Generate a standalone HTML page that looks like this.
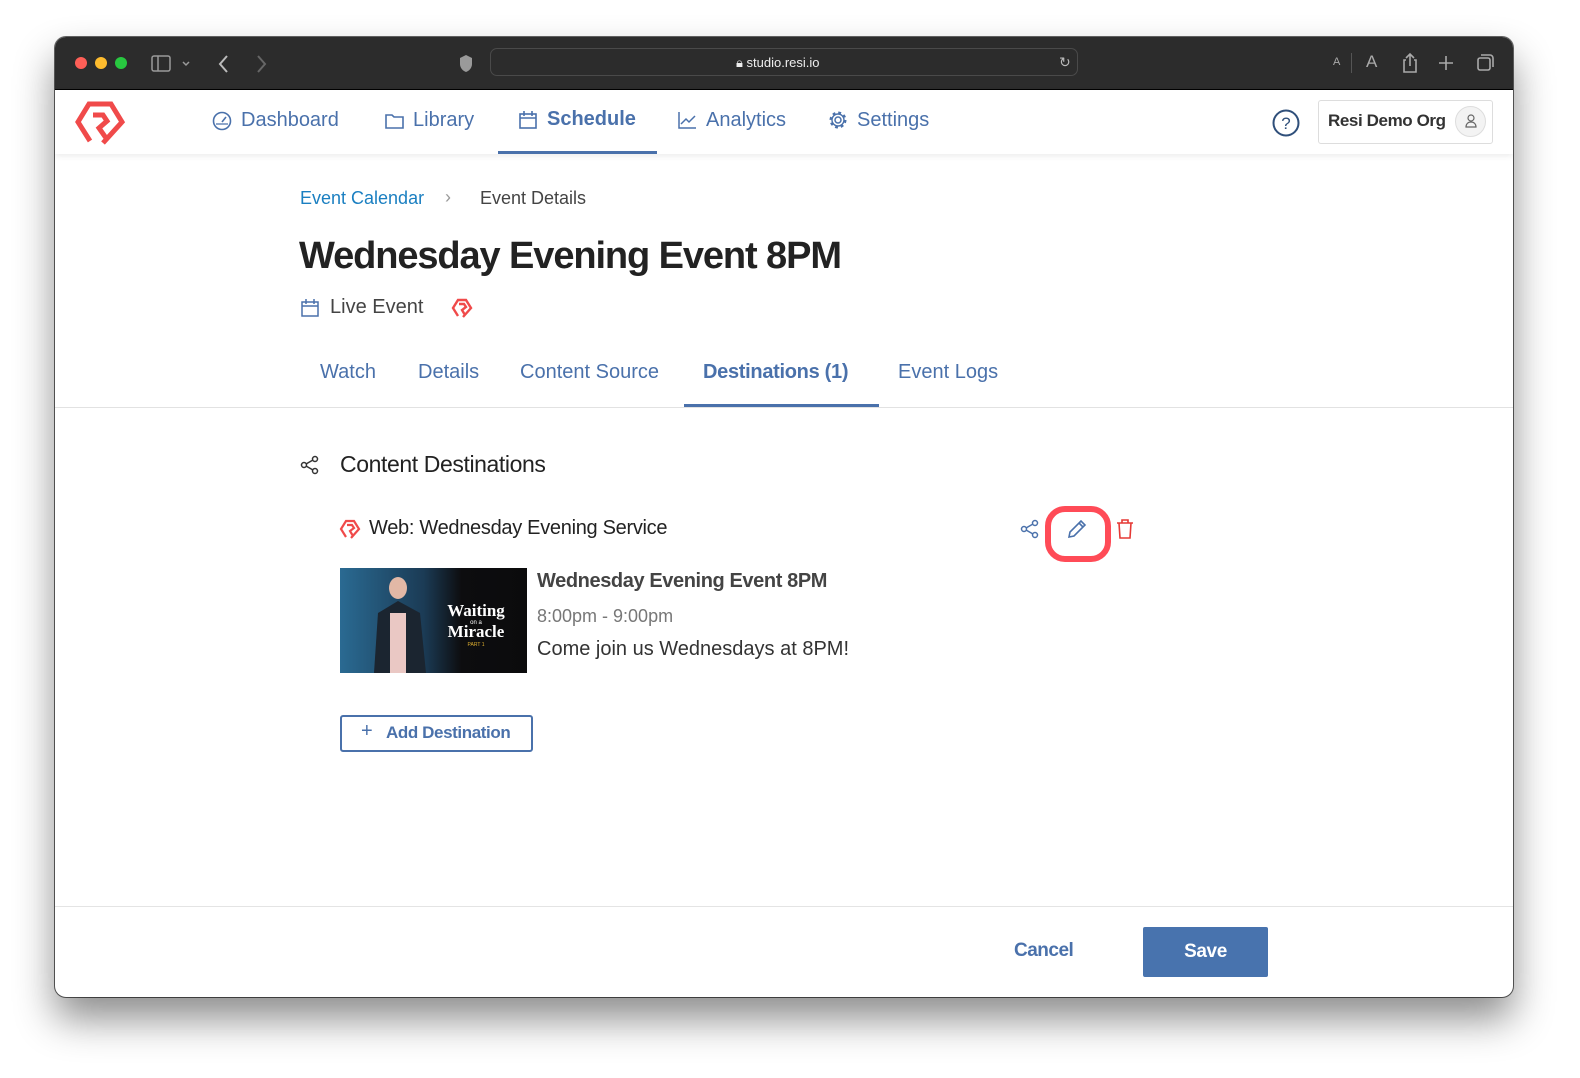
<!DOCTYPE html>
<html><head><meta charset="utf-8"><style>
*{margin:0;padding:0;box-sizing:border-box}
body{width:1580px;height:1078px;background:#fff;position:relative;overflow:hidden;font-family:"Liberation Sans",sans-serif}
.win{position:absolute;left:55px;top:37px;width:1458px;height:960px;border-radius:11px;background:#fff;overflow:hidden;box-shadow:0 22px 40px rgba(0,0,0,.45),0 0 0 1px rgba(0,0,0,.6)}
.tb{position:absolute;left:0;top:0;width:100%;height:53px;background:#2c2c2c;border-bottom:1px solid #000}
.a{position:absolute;white-space:nowrap}
.nav{position:absolute;left:0;top:53px;width:100%;height:64px;background:#fff;box-shadow:0 2px 6px rgba(0,0,0,.08)}
.nl{color:#4a71ab;font-size:20px}
</style></head><body>
<div class="win">
 <div class="tb">
  <div class="a" style="left:20px;top:20px;width:12px;height:12px;border-radius:50%;background:#fe5f57"></div>
  <div class="a" style="left:40px;top:20px;width:12px;height:12px;border-radius:50%;background:#febc2e"></div>
  <div class="a" style="left:60px;top:20px;width:12px;height:12px;border-radius:50%;background:#28c840"></div>
  <svg class="a" style="left:96px;top:17px" width="50" height="20"><rect x="1" y="2" width="18" height="15" rx="2" fill="none" stroke="#9a9a9a" stroke-width="1.5"/><line x1="7" y1="2" x2="7" y2="17" stroke="#9a9a9a" stroke-width="1.5"/><path d="M32 8l3 3 3-3" stroke="#9a9a9a" fill="none" stroke-width="1.5"/></svg>
  <svg class="a" style="left:160px;top:16px" width="60" height="22"><path d="M12 3l-7 8 7 8" stroke="#bbb" fill="none" stroke-width="2"/><path d="M43 3l7 8-7 8" stroke="#666" fill="none" stroke-width="2"/></svg>
  <svg class="a" style="left:403px;top:17px" width="16" height="20"><path d="M8 1l6 3v6c0 4-3 7-6 8-3-1-6-4-6-8V4z" fill="#9a9a9a"/></svg>
  <div class="a" style="left:435px;top:11px;width:588px;height:28px;border:1px solid #4a4a4a;border-radius:7px;background:#2c2c2c"></div>
  <div class="a" style="left:681px;top:18px;color:#eee;font-size:13px">🔒︎ studio.resi.io</div>
  <div class="a" style="left:1004px;top:17px;color:#bbb;font-size:14px">↻</div>
  <div class="a" style="left:1278px;top:19px;color:#aaa;font-size:11px">A</div>
  <div class="a" style="left:1296px;top:16px;width:1px;height:20px;background:#555"></div>
  <div class="a" style="left:1311px;top:15px;color:#aaa;font-size:17px">A</div>
  <svg class="a" style="left:1345px;top:14px" width="120" height="24"><path d="M6 9H4v12h12V9h-2M10 3v12M6 7l4-4 4 4" stroke="#aaa" fill="none" stroke-width="1.6"/><path d="M46 5v14M39 12h14" stroke="#aaa" stroke-width="1.6"/><rect x="78" y="7" width="12" height="12" rx="2" stroke="#aaa" fill="none" stroke-width="1.6"/><path d="M81 4h9a3 3 0 0 1 3 3v9" stroke="#aaa" fill="none" stroke-width="1.6"/></svg>
 </div>
 <div class="nav">
  <svg class="a" style="left:20px;top:10px" width="50" height="46"><g fill="none" stroke="#f04a4a" stroke-width="5" stroke-linejoin="miter"><path d="M15 41L3 22 14 4h22l11 18-19 21"/><path d="M18 15h10l4 6-8 7 7 10"/></g></svg>
  <svg class="a" style="left:156px;top:20px" width="22" height="22"><circle cx="11" cy="11" r="8.5" fill="none" stroke="#4a71ab" stroke-width="1.6"/><path d="M11 12l4-5" stroke="#4a71ab" stroke-width="1.6"/><path d="M5 14h12" stroke="#4a71ab" stroke-width="1.2"/></svg>
  <div class="a nl" style="left:186px;top:19px">Dashboard</div>
  <svg class="a" style="left:329px;top:21px" width="22" height="20"><path d="M2 4h6l2 2h9v11H2z" fill="none" stroke="#4a71ab" stroke-width="1.6"/></svg>
  <div class="a nl" style="left:358px;top:19px">Library</div>
  <svg class="a" style="left:463px;top:20px" width="20" height="20"><rect x="2" y="4" width="16" height="14" fill="none" stroke="#4a71ab" stroke-width="1.6"/><path d="M2 8h16M6 1v5M14 1v5" stroke="#4a71ab" stroke-width="1.6"/></svg>
  <div class="a nl" style="left:492px;top:18px;font-weight:bold">Schedule</div>
  <div class="a" style="left:443px;top:61px;width:159px;height:3px;background:#4a71ab"></div>
  <svg class="a" style="left:622px;top:20px" width="20" height="20"><path d="M2 2v16h17M4 14l5-5 3 3 6-6" fill="none" stroke="#4a71ab" stroke-width="1.5"/></svg>
  <div class="a nl" style="left:651px;top:19px">Analytics</div>
  <svg class="a" style="left:772px;top:19px" width="22" height="22"><circle cx="11" cy="11" r="3" fill="none" stroke="#4a71ab" stroke-width="1.5"/><circle cx="11" cy="11" r="7" fill="none" stroke="#4a71ab" stroke-width="3" stroke-dasharray="2.7 2.8"/><circle cx="11" cy="11" r="6" fill="none" stroke="#4a71ab" stroke-width="1.4"/></svg>
  <div class="a nl" style="left:802px;top:19px">Settings</div>
  <svg class="a" style="left:1216px;top:18px" width="30" height="30"><circle cx="15" cy="15" r="12.5" fill="none" stroke="#2f4f7a" stroke-width="2"/><text x="15" y="21" text-anchor="middle" font-family="Liberation Sans" font-size="17" fill="#2f4f7a">?</text></svg>
  <div class="a" style="left:1263px;top:10px;width:175px;height:44px;border:1px solid #ddd;border-radius:3px"></div>
  <div class="a" style="left:1273px;top:21px;font-size:17px;color:#333;font-weight:bold;letter-spacing:-.4px">Resi Demo Org</div>
  <div class="a" style="left:1400px;top:16px;width:31px;height:31px;border-radius:50%;background:#f3f3f3;border:1px solid #ddd"></div>
  <svg class="a" style="left:1408px;top:23px" width="16" height="16"><circle cx="8" cy="5" r="3" fill="none" stroke="#666" stroke-width="1.2"/><path d="M3 14c0-3 2-5 5-5s5 2 5 5z" fill="none" stroke="#666" stroke-width="1.2"/></svg>
 </div>

 <div class="a" style="left:245px;top:151px;font-size:18px;color:#1a7fc1">Event Calendar</div>
 <div class="a" style="left:390px;top:150px;font-size:18px;color:#999">›</div>
 <div class="a" style="left:425px;top:151px;font-size:18px;color:#444">Event Details</div>
 <div class="a" style="left:244px;top:198px;font-size:38px;font-weight:bold;color:#222;letter-spacing:-1.1px">Wednesday Evening Event 8PM</div>
 <svg class="a" style="left:245px;top:261px" width="20" height="20"><rect x="2" y="4" width="16" height="14" fill="none" stroke="#4a71ab" stroke-width="1.5"/><path d="M2 8h16M6 1v5M14 1v5" stroke="#4a71ab" stroke-width="1.5"/></svg>
 <div class="a" style="left:275px;top:259px;font-size:20px;color:#444">Live Event</div>
 <svg class="a" style="left:396px;top:260px" width="22" height="22"><g fill="none" stroke="#f04a4a" stroke-width="2.4"><path d="M7 19L2 11 7 3h8l5 8-8 9"/><path d="M8 7h5l2 3-4 3 3 5"/></g></svg>

 <div class="a nl" style="left:265px;top:324px">Watch</div>
 <div class="a nl" style="left:363px;top:324px">Details</div>
 <div class="a nl" style="left:465px;top:324px">Content Source</div>
 <div class="a nl" style="left:648px;top:324px;font-weight:bold;letter-spacing:-.3px">Destinations (1)</div>
 <div class="a nl" style="left:843px;top:324px">Event Logs</div>
 <div class="a" style="left:0;top:370px;width:100%;height:1px;background:#e2e2e2"></div>
 <div class="a" style="left:629px;top:367px;width:195px;height:3px;background:#4a71ab"></div>

 <svg class="a" style="left:245px;top:418px" width="20" height="20"><g fill="none" stroke="#333" stroke-width="1.5"><circle cx="4" cy="10" r="2.5"/><circle cx="15" cy="4" r="2.5"/><circle cx="15" cy="16" r="2.5"/><path d="M6 9l7-4M6 11l7 4"/></g></svg>
 <div class="a" style="left:285px;top:414px;font-size:23px;color:#222;letter-spacing:-.4px">Content Destinations</div>

 <svg class="a" style="left:284px;top:481px" width="22" height="22"><g fill="none" stroke="#f04a4a" stroke-width="2.2"><path d="M7 19L2 11 7 3h8l5 8-8 9"/><path d="M8 7h5l2 3-4 3 3 5"/></g></svg>
 <div class="a" style="left:314px;top:480px;font-size:20px;color:#222;letter-spacing:-.3px">Web: Wednesday Evening Service</div>
 <svg class="a" style="left:965px;top:482px" width="20" height="20"><g fill="none" stroke="#4a71ab" stroke-width="1.5"><circle cx="4" cy="10" r="2.5"/><circle cx="15" cy="4" r="2.5"/><circle cx="15" cy="16" r="2.5"/><path d="M6 9l7-4M6 11l7 4"/></g></svg>
 <div class="a" style="left:990px;top:469px;width:66px;height:56px;border:6px solid #ff4b57;border-radius:20px"></div>
 <svg class="a" style="left:1010px;top:480px" width="24" height="24"><path d="M4 20l1-5L16 4l4 4L9 19z M14 6l4 4" fill="none" stroke="#4a71ab" stroke-width="1.6"/></svg>
 <svg class="a" style="left:1060px;top:481px" width="20" height="22"><path d="M2 5h16M7 5V2h6v3M4 5l1 15h10l1-15" fill="none" stroke="#e53935" stroke-width="1.6"/></svg>

 <svg class="a" style="left:285px;top:531px" width="187" height="105">
  <defs><linearGradient id="g" x1="0" x2="1"><stop offset="0" stop-color="#2a6a92"/><stop offset=".45" stop-color="#1b3b55"/><stop offset=".65" stop-color="#0d0d0f"/><stop offset="1" stop-color="#0b0b0c"/></linearGradient></defs>
  <rect width="187" height="105" fill="url(#g)"/>
  <ellipse cx="58" cy="20" rx="9" ry="11" fill="#e2b8a6"/>
  <path d="M34 105l4-60 20-12 22 12 6 60z" fill="#1b2530"/>
  <rect x="50" y="45" width="16" height="60" fill="#eac8c4"/>
  <text x="136" y="48" text-anchor="middle" font-family="Liberation Serif" font-weight="bold" font-size="17" fill="#fff">Waiting</text>
  <text x="136" y="56" text-anchor="middle" font-family="Liberation Sans" font-size="6" fill="#fff">on a</text>
  <text x="136" y="69" text-anchor="middle" font-family="Liberation Serif" font-weight="bold" font-size="17" fill="#fff">Miracle</text>
  <text x="136" y="78" text-anchor="middle" font-family="Liberation Sans" font-size="5" fill="#e0b030">PART 1</text>
 </svg>
 <div class="a" style="left:482px;top:533px;font-size:20px;font-weight:bold;color:#444;letter-spacing:-.4px">Wednesday Evening Event 8PM</div>
 <div class="a" style="left:482px;top:569px;font-size:18px;color:#777">8:00pm - 9:00pm</div>
 <div class="a" style="left:482px;top:601px;font-size:20px;color:#333">Come join us Wednesdays at 8PM!</div>

 <div class="a" style="left:285px;top:678px;width:193px;height:37px;border:2px solid #4a71ab;border-radius:3px"></div>
 <div class="a" style="left:306px;top:683px;font-size:20px;color:#4a71ab">+</div>
 <div class="a" style="left:331px;top:686px;font-size:17px;font-weight:bold;color:#4a71ab;letter-spacing:-.4px">Add Destination</div>

 <div class="a" style="left:0;top:869px;width:100%;height:1px;background:#e4e4e4"></div>
 <div class="a" style="left:959px;top:903px;font-size:19px;font-weight:bold;color:#4a71ab;letter-spacing:-.5px">Cancel</div>
 <div class="a" style="left:1088px;top:890px;width:125px;height:50px;background:#4873ae;border-radius:2px;color:#fff;font-size:19px;font-weight:bold;text-align:center;line-height:50px;letter-spacing:-.4px">Save</div>
</div>
</body></html>
